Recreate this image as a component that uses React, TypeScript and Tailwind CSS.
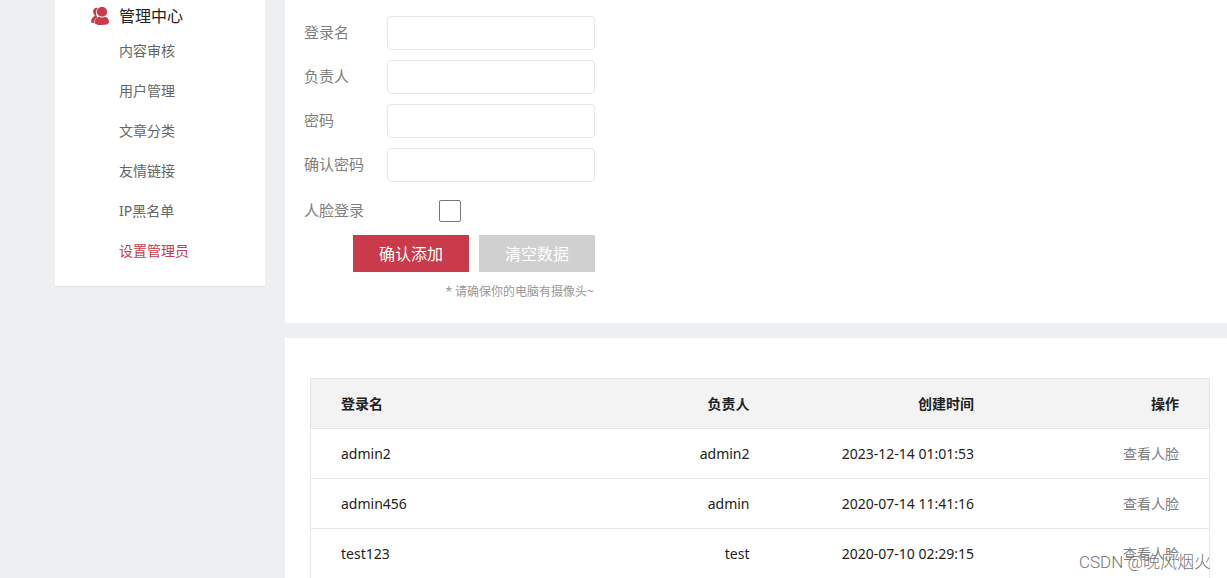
import { useState } from 'react'

type Admin = {
  login: string
  owner: string
  createdAt: string
}

const menu = ['内容审核', '用户管理', '文章分类', '友情链接', 'IP黑名单', '设置管理员']

const fields = [
  { name: 'login', label: '登录名', type: 'text' },
  { name: 'owner', label: '负责人', type: 'text' },
  { name: 'password', label: '密码', type: 'password' },
  { name: 'confirm', label: '确认密码', type: 'password' }
]

const admins: Admin[] = [
  { login: 'admin2', owner: 'admin2', createdAt: '2023-12-14 01:01:53' },
  { login: 'admin456', owner: 'admin', createdAt: '2020-07-14 11:41:16' },
  { login: 'test123', owner: 'test', createdAt: '2020-07-10 02:29:15' }
]

function UsersIcon() {
  return (
    <svg viewBox="0 0 18 18" className="h-[18px] w-[18px] shrink-0" fill="#c93a4b" aria-hidden="true">
      <path d="M7 1C4.200.4 2.100 2 2.100 4.600c0 1.700.8 3.200 2 4.100C1.800 9.600.1 11.700.1 14.400c0 1 .9 1.500 2.700 1.600.2-2.500 1.400-4.500 3.500-5.800C5.400 9 5.100 7.200 5.100 5.200 5.100 3.500 5.800 1.900 7 1Z" />
      <path d="M11 0c2.900 0 5.100 1.900 5.100 4.700 0 2.900-2.200 4.900-5.100 4.900S5.900 7.600 5.900 4.700C5.900 1.900 8.100 0 11 0Z" />
      <path d="M7.600 9.700c1 .5 2.100.7 3.400.7s2.400-.2 3.400-.7c2.200.9 3.600 2.900 3.600 5.400 0 1.900-2.500 2.900-7.100 2.900s-7.300-.9-7.300-2.800c0-2.500 1.700-4.600 4-5.500Z" />
    </svg>
  )
}

export default function App() {
  const [form, setForm] = useState<Record<string, string>>({})
  const [face, setFace] = useState(false)

  const handleReset = () => {
    setForm({})
    setFace(false)
  }

  return (
    <div className="relative flex min-h-screen items-start gap-5 overflow-hidden bg-[#eeeff1] pl-[55px] font-['Noto_Sans','Noto_Sans_CJK_SC',sans-serif] text-sm text-[#222]">
      <nav className="w-[210px] shrink-0 border-b border-[#e4e5e7] bg-white pb-[15px]">
        <h2 className="flex h-[31px] items-center gap-2.5 pl-9 text-base">
          <UsersIcon />
          管理中心
        </h2>
        <ul>
          {menu.map(item => (
            <li key={item}>
              <a
                href="#"
                className={
                  item === '设置管理员'
                    ? 'block pl-16 leading-10 text-[#c93a4b]'
                    : 'block pl-16 leading-10 text-[#666]'
                }
              >
                {item}
              </a>
            </li>
          ))}
        </ul>
      </nav>

      <main className="flex min-h-screen min-w-0 flex-1 flex-col gap-[15px]">
        <section className="bg-white pt-4 pr-5 pb-[22px] pl-[19px]">
          <form className="w-[291px]" onSubmit={e => e.preventDefault()}>
            <div className="flex flex-col gap-2.5">
              {fields.map(f => (
                <div key={f.name} className="flex h-[34px] items-center">
                  <label htmlFor={f.name} className="w-[83px] text-[15px] text-[#808080]">
                    {f.label}
                  </label>
                  <input
                    id={f.name}
                    type={f.type}
                    value={form[f.name] ?? ''}
                    onChange={e => setForm({ ...form, [f.name]: e.target.value })}
                    className="h-full min-w-0 flex-1 rounded border border-[#e6e6e6] bg-white px-2.5 outline-none"
                  />
                </div>
              ))}
              <div className="flex h-[38px] items-center">
                <label htmlFor="face" className="w-[83px] text-[15px] text-[#808080]">
                  人脸登录
                </label>
                <input
                  id="face"
                  type="checkbox"
                  checked={face}
                  onChange={e => setFace(e.target.checked)}
                  className="ml-13 h-[22px] w-[22px] appearance-none rounded-xs border border-[#767676] bg-white checked:bg-[#c93a4b]"
                />
              </div>
            </div>
            <div className="mt-[5px] flex justify-end gap-2.5 text-base text-white">
              <button type="submit" className="h-[37px] w-[116px] bg-[#c93a4b]">
                确认添加
              </button>
              <button type="button" onClick={handleReset} className="h-[37px] w-[116px] bg-[#d0d0d0]">
                清空数据
              </button>
            </div>
            <p className="mt-2.5 pr-px text-right text-xs leading-[19px] text-[#999]">* 请确保你的电脑有摄像头~</p>
          </form>
        </section>

        <section className="flex-1 bg-white pt-10 pr-[17px] pl-[25px]">
          <table className="w-full table-fixed border-separate border-spacing-0 border-x border-[#e6e6e6]">
            <thead>
              <tr className="h-[50px] bg-[#f3f3f3]">
                <th className="border-t border-[#e6e6e6] px-[30px] text-left">登录名</th>
                <th className="w-1/4 border-t border-[#e6e6e6] px-[30px] text-right">负责人</th>
                <th className="w-1/4 border-t border-[#e6e6e6] px-[30px] text-right">创建时间</th>
                <th className="w-[205px] border-t border-[#e6e6e6] px-[30px] text-right">操作</th>
              </tr>
            </thead>
            <tbody>
              {admins.map(a => (
                <tr key={a.login} className="h-[50px]">
                  <td className="border-t border-[#e6e6e6] px-[30px]">{a.login}</td>
                  <td className="border-t border-[#e6e6e6] px-[30px] text-right">{a.owner}</td>
                  <td className="border-t border-[#e6e6e6] px-[30px] text-right whitespace-nowrap">{a.createdAt}</td>
                  <td className="border-t border-[#e6e6e6] px-[30px] text-right">
                    <a href="#" className="text-[#808080]">
                      查看人脸
                    </a>
                  </td>
                </tr>
              ))}
            </tbody>
          </table>
        </section>
      </main>

      <span className="pointer-events-none absolute right-4 bottom-1 font-[Roboto,'Noto_Sans_CJK_SC',sans-serif] text-[17px] font-light text-[#777] [text-shadow:1px_1px_0_#fff]">
        CSDN @晚风烟火
      </span>
    </div>
  )
}
